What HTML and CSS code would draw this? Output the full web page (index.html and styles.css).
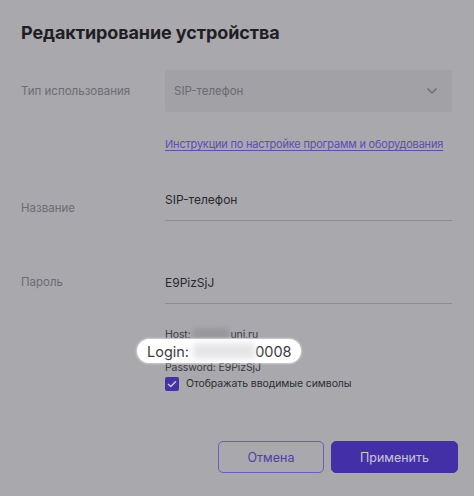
FILE: index.html
```html
<!DOCTYPE html>
<html lang="ru">
<head>
<meta charset="utf-8">
<link rel="stylesheet" href="styles.css">
</head>
<body>
<div class="dialog">
  <h1 class="title">Редактирование устройства</h1>
  <div class="row row-select">
    <div class="label">Тип использования</div>
    <div class="select">
      <span>SIP-телефон</span>
      <svg class="chev" width="12" height="8" viewBox="0 0 12 8"><path d="M1.5 1.5 L6 6 L10.5 1.5" fill="none" stroke="#6e6e74" stroke-width="1.5"/></svg>
    </div>
  </div>
  <div class="row row-link">
    <div></div>
    <a class="link" href="#">Инструкции по настройке программ и оборудования</a>
  </div>
  <div class="row row-name">
    <div class="label">Название</div>
    <div class="field">SIP-телефон</div>
  </div>
  <div class="row row-pass">
    <div class="label">Пароль</div>
    <div class="field">E9PizSjJ</div>
  </div>
  <div class="row row-info">
    <div></div>
    <div class="info">
      <div class="line">Host: <span class="blur blur-host"></span>uni.ru</div>
      <div class="login"><span>Login: </span><span class="blur blur-login"></span><span>0008</span></div>
      <div class="line">Password: E9PizSjJ</div>
      <label class="check">
        <span class="box"><svg width="10" height="8" viewBox="0 0 10 8"><path d="M1 4 L3.8 6.6 L9 1.2" fill="none" stroke="#c9c6e0" stroke-width="1.4"/></svg></span>
        <span>Отображать вводимые символы</span>
      </label>
    </div>
  </div>
  <div class="actions">
    <button class="btn btn-cancel">Отмена</button>
    <button class="btn btn-apply">Применить</button>
  </div>
</div>
</body>
</html>
```
FILE: styles.css
```css
* { box-sizing: border-box; }
html, body { margin: 0; padding: 0; }
body {
  background: #a8a8ad;
  font-family: Inter, "Noto Sans", sans-serif;
  width: 474px;
  height: 496px;
  overflow: hidden;
}
.dialog {
  padding: 22px 16px 0 21px;
}
.title {
  margin: 0;
  font-size: 18px;
  line-height: 22px;
  font-weight: 700;
  color: #1e1e24;
  letter-spacing: -0.1px;
}
.row {
  display: grid;
  grid-template-columns: 144px 287px;
  align-items: center;
}
.label {
  font-size: 11.5px;
  color: #6c6c72;
}
.row-select { margin-top: 26px; }
.select {
  height: 42px;
  background: #a1a1a6;
  border-radius: 3px;
  display: flex;
  align-items: center;
  justify-content: space-between;
  padding: 0 14px 0 9px;
  font-size: 11.5px;
  color: #6a6a70;
}
.row-link { margin-top: 25px; }
.link {
  font-size: 11px;
  letter-spacing: -0.2px;
  color: #5b4fb3;
  text-decoration: underline;
  text-underline-offset: 2px;
  white-space: nowrap;
}
.field {
  font-size: 12px;
  color: #28282e;
  border-bottom: 1px solid #8d8d92;
  padding-bottom: 13px;
}
.row-name { margin-top: 41px; align-items: start; }
.row-name .label { padding-top: 9px; }
.row-pass { margin-top: 54px; align-items: start; }
.row-info { margin-top: 23px; align-items: start; }
.info {
  font-size: 10.5px;
  letter-spacing: -0.1px;
  color: #3a3a40;
  line-height: 15px;
}
.line { white-space: nowrap; }
.blur {
  display: inline-block;
  filter: blur(2px);
  border-radius: 3px;
}
.blur-host { background: #98989d; width: 36px; height: 12px; vertical-align: -2px; margin-right: 1px; }
.login {
  display: flex;
  width: fit-content;
  align-items: center;
  margin-left: -28px;
  margin-top: -3px;
  margin-bottom: -3px;
  padding: 0 9px 0 10px;
  height: 24px;
  background: #ffffff;
  border-radius: 12px;
  box-shadow: 0 0 2px 1px rgba(255,255,255,0.45);
  font-size: 14.5px;
  letter-spacing: 0;
  color: #3c3c42;
  white-space: pre;
  position: relative;
}
.blur-login { background: #e6e6e8; width: 62px; height: 16px; filter: blur(3px); }
.check {
  display: flex;
  align-items: center;
  gap: 7px;
  margin-top: 1px;
  color: #2e2e34;
  font-size: 10.5px;
}
.box {
  width: 14px;
  height: 14px;
  border-radius: 2px;
  background: #4532a4;
  display: flex;
  align-items: center;
  justify-content: center;
}
.actions {
  display: flex;
  justify-content: flex-end;
  gap: 7px;
  margin-top: 50px;
}
.btn {
  height: 32px;
  border-radius: 5px;
  font-family: Inter, "Noto Sans", sans-serif;
  font-size: 12.5px;
  cursor: pointer;
}
.btn-cancel {
  width: 106px;
  background: transparent;
  border: 1px solid #6a5fc0;
  color: #4c3fa8;
}
.btn-apply {
  width: 127px;
  background: #4430a6;
  border: 1px solid #4430a6;
  color: #c8c6d8;
}
```
